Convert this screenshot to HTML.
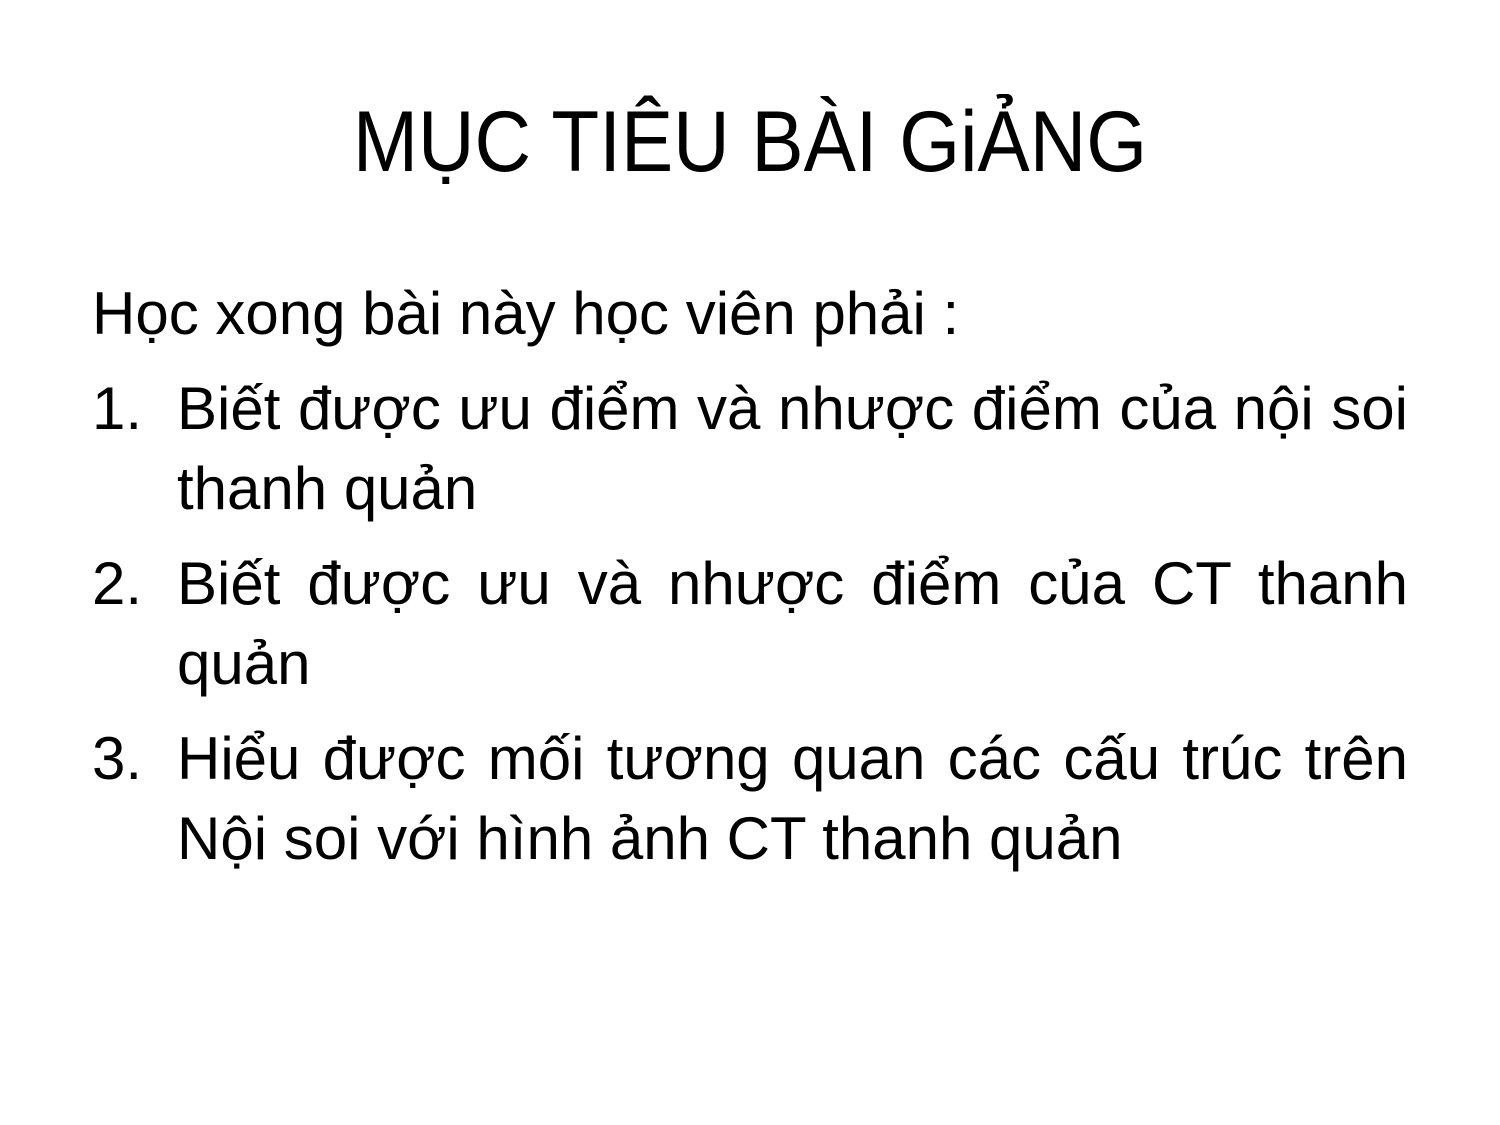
<!DOCTYPE html>
<html><head><meta charset="utf-8"><style>
body{margin:0;width:1500px;height:1125px;background:#fff;position:relative;overflow:hidden;font-family:"Liberation Sans",sans-serif;color:#000}
.l{position:absolute;font-size:60px;line-height:60px;white-space:nowrap}
.j{white-space:normal;text-align:justify;text-align-last:justify}
.t{position:absolute;left:0;width:1500px;text-align:center;font-size:86px;line-height:86px;top:99px;transform:scaleX(0.91);transform-origin:750px 0}
</style></head><body>
<div class="t">MỤC TIÊU BÀI GiẢNG</div>
<div class="l" style="left:92px;top:284px">Học xong bài này học viên phải :</div>
<div class="l" style="left:92px;top:379px">1.</div>
<div class="l j" style="left:177px;top:379px;width:1231px">Biết được ưu điểm và nhược điểm của nội soi</div>
<div class="l" style="left:177px;top:459px">thanh quản</div>
<div class="l" style="left:92px;top:554px">2.</div>
<div class="l j" style="left:177px;top:554px;width:1231px">Biết được ưu và nhược điểm của CT thanh</div>
<div class="l" style="left:177px;top:634px">quản</div>
<div class="l" style="left:92px;top:729px">3.</div>
<div class="l j" style="left:177px;top:729px;width:1231px">Hiểu được mối tương quan các cấu trúc trên</div>
<div class="l" style="left:177px;top:809px">Nội soi với hình ảnh CT thanh quản</div>
</body></html>
